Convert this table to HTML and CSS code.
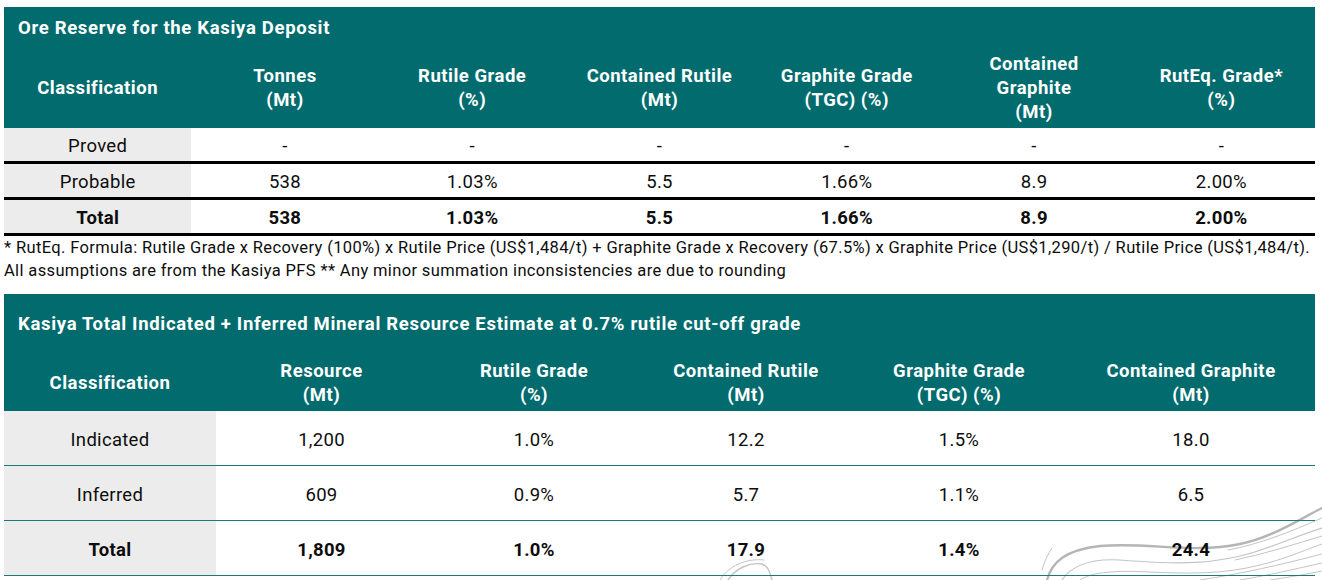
FILE: index.html
```html
<!DOCTYPE html>
<html lang="en">
<head>
<meta charset="utf-8">
<title>Kasiya Ore Reserve and Mineral Resource</title>
<link rel="stylesheet" href="styles.css">
</head>
<body>
<div class="page">
  <svg class="contours" width="642" height="110" viewBox="0 0 642 110" aria-hidden="true">
    <g fill="none" stroke="#c4c4c4" stroke-linecap="round">
      <path d="M367 110 C372 92 385 80 420 76 C470 72 510 84 560 74 C590 68 615 52 642 38" stroke-width="2.4" stroke="#b5b5b5"/>
      <path d="M382 110 C390 98 405 88 440 90 C480 93 520 96 560 86 C590 79 615 66 642 58" stroke-width="1.2"/>
      <path d="M400 110 C410 103 430 100 470 102 C510 104 545 104 580 95 C605 89 625 80 642 74" stroke-width="1"/>
      <path d="M520 110 C560 104 600 95 642 84" stroke-width="1"/>
      <path d="M560 110 C590 105 615 99 642 93" stroke-width="1"/>
      <path d="M590 110 C610 107 628 104 642 101" stroke-width="1"/>
      <path d="M548 80 C580 74 610 62 642 48" stroke-width="1"/>
      <path d="M555 90 C585 84 615 74 642 66" stroke-width="1"/>
      <path d="M362 100 C364 92 368 84 372 78" stroke-width="1"/>
      <path d="M48 110 C56 98 70 92 82 94 C88 96 90 102 92 110" stroke-width="1.4"/>
      <path d="M40 110 C48 96 66 88 84 90" stroke-width="1"/>
    </g>
  </svg>

  <section class="block">
    <div class="title">Ore Reserve for the Kasiya Deposit</div>
    <table class="grid reserve">
      <thead>
        <tr>
          <th>Classification</th>
          <th>Tonnes<br>(Mt)</th>
          <th>Rutile Grade<br>(%)</th>
          <th>Contained Rutile<br>(Mt)</th>
          <th>Graphite Grade<br>(TGC) (%)</th>
          <th>Contained<br>Graphite<br>(Mt)</th>
          <th>RutEq. Grade*<br>(%)</th>
        </tr>
      </thead>
      <tbody>
        <tr>
          <td class="cls">Proved</td><td>-</td><td>-</td><td>-</td><td>-</td><td>-</td><td>-</td>
        </tr>
        <tr>
          <td class="cls">Probable</td><td>538</td><td>1.03%</td><td>5.5</td><td>1.66%</td><td>8.9</td><td>2.00%</td>
        </tr>
        <tr class="total">
          <td class="cls">Total</td><td>538</td><td>1.03%</td><td>5.5</td><td>1.66%</td><td>8.9</td><td>2.00%</td>
        </tr>
      </tbody>
    </table>
  </section>

  <p class="note">* RutEq. Formula: Rutile Grade x Recovery (100%) x Rutile Price (US$1,484/t) + Graphite Grade x Recovery (67.5%) x Graphite Price (US$1,290/t) / Rutile Price (US$1,484/t).<br>All assumptions are from the Kasiya PFS ** Any minor summation inconsistencies are due to rounding</p>

  <section class="block second">
    <div class="title title-tall">Kasiya Total Indicated + Inferred Mineral Resource Estimate at 0.7% rutile cut-off grade</div>
    <table class="grid resource">
      <colgroup>
        <col class="c1"><col class="c2"><col class="c3"><col class="c4"><col class="c5"><col class="c6">
      </colgroup>
      <thead>
        <tr>
          <th>Classification</th>
          <th>Resource<br>(Mt)</th>
          <th>Rutile Grade<br>(%)</th>
          <th>Contained Rutile<br>(Mt)</th>
          <th>Graphite Grade<br>(TGC) (%)</th>
          <th>Contained Graphite<br>(Mt)</th>
        </tr>
      </thead>
      <tbody>
        <tr>
          <td class="cls">Indicated</td><td>1,200</td><td>1.0%</td><td>12.2</td><td>1.5%</td><td>18.0</td>
        </tr>
        <tr>
          <td class="cls">Inferred</td><td>609</td><td>0.9%</td><td>5.7</td><td>1.1%</td><td>6.5</td>
        </tr>
        <tr class="total">
          <td class="cls">Total</td><td>1,809</td><td>1.0%</td><td>17.9</td><td>1.4%</td><td>24.4</td>
        </tr>
      </tbody>
    </table>
  </section>
</div>
</body>
</html>
```

FILE: styles.css
```css
* { box-sizing: border-box; }

html, body {
  margin: 0;
  padding: 0;
  background: #ffffff;
}

body {
  font-family: Roboto, "Liberation Sans", Arial, sans-serif;
  color: #0d0d0d;
}

.page {
  position: relative;
  width: 1322px;
  height: 580px;
  overflow: hidden;
  padding: 7px 7px 0 4px;
}

.contours {
  position: absolute;
  left: 680px;
  top: 470px;
  z-index: 0;
}

.block {
  position: relative;
  z-index: 1;
  width: 1311px;
}

.second {
  margin-top: 12px;
}

.title {
  background: #026b6e;
  color: #ffffff;
  font-weight: 700;
  font-size: 18.5px;
  letter-spacing: 0.68px;
  line-height: 24px;
  height: 37px;
  padding: 9px 14px 0;
  white-space: nowrap;
}

.title-tall {
  height: 53px;
  padding-top: 18px;
}

.grid {
  width: 1311px;
  border-collapse: separate;
  border-spacing: 0;
  table-layout: fixed;
}

.grid th {
  background: #026b6e;
  color: #ffffff;
  font-weight: 700;
  font-size: 18.5px;
  letter-spacing: 0.5px;
  line-height: 24px;
  padding: 4px 0 0;
  text-align: center;
  vertical-align: middle;
}

.grid td {
  font-size: 18.5px;
  letter-spacing: 0.3px;
  text-align: center;
  vertical-align: middle;
  padding: 3px 0 0;
  color: #0d0d0d;
}

.grid td.cls {
  background: #ececec;
}

.grid .total td {
  font-weight: 700;
}

/* Ore reserve table */
.reserve th {
  height: 84px;
}

.reserve td {
  line-height: 30px;
  border-bottom: 3px solid #000000;
}

/* Resource table */
.resource th {
  height: 64px;
  padding-top: 7px;
}

.resource td {
  height: 55px;
  padding-top: 5px;
  line-height: 49px;
  border-bottom: 1px solid #1b7a77;
}

.resource .c1 { width: 212px; }
.resource .c2 { width: 211px; }
.resource .c3 { width: 214px; }
.resource .c4 { width: 210px; }
.resource .c5 { width: 216px; }
.resource .c6 { width: 248px; }

.note {
  position: relative;
  z-index: 1;
  margin: 0;
  font-size: 16.5px;
  letter-spacing: 0.36px;
  line-height: 23px;
  color: #0d0d0d;
  white-space: nowrap;
}
```
